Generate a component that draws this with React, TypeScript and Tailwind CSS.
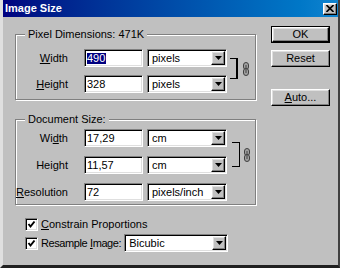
const sunken =
  'bg-white border border-t-[#808080] border-l-[#808080] border-r-white border-b-white shadow-[inset_1px_1px_0_#000,inset_-1px_-1px_0_#dfdfdf]'
const raised =
  'bg-[#c0c0c0] border border-t-white border-l-white border-r-black border-b-black shadow-[inset_-1px_-1px_0_#808080,inset_1px_1px_0_#dfdfdf]'
const etched = 'border border-[#808080] shadow-[inset_1px_1px_0_#fff,1px_1px_0_#fff]'

const Arrow = () => (
  <div className={`${raised} ml-auto w-[14px] h-[14px] flex items-center justify-center`}>
    <svg width="7" height="4" viewBox="0 0 7 4">
      <polygon points="0,0 7,0 3.5,4" fill="#000" />
    </svg>
  </div>
)

const Select = ({ value, className }: { value: string; className: string }) => (
  <div className={`${sunken} ${className} h-[18px] flex items-center pl-[4px] pr-[1px]`}>
    <span>{value}</span>
    <Arrow />
  </div>
)

const Field = ({ value, selected }: { value: string; selected?: boolean }) => (
  <div className={`${sunken} w-[59px] h-[18px] flex items-center pl-[2px]`}>
    {selected ? <span className="bg-[#000080] text-white leading-[11px] pr-[1px]">{value}</span> : value}
  </div>
)

const Row = ({ label, value, unit, selected }: { label: React.ReactNode; value: string; unit: string; selected?: boolean }) => (
  <div className="flex items-center">
    <div className="w-[52px] mr-[16px] text-right whitespace-nowrap">{label}</div>
    <Field value={value} selected={selected} />
    <Select value={unit} className="ml-[4px] w-[80px]" />
  </div>
)

const Chain = () => (
  <svg width="6" height="14" viewBox="0 0 6 14">
    <rect x="0.5" y="0.5" width="5" height="7" rx="2.5" fill="#a0a0a0" stroke="#404040" />
    <rect x="0.5" y="6.5" width="5" height="7" rx="2.5" fill="#a0a0a0" stroke="#404040" />
    <line x1="3" y1="3" x2="3" y2="11" stroke="#404040" />
  </svg>
)

const Check = () => (
  <div className={`${sunken} w-[13px] h-[13px] flex items-center justify-center shrink-0`}>
    <svg width="9" height="9" viewBox="0 0 9 9">
      <path d="M1.5 4 L3.5 6.5 L7.5 1.5" fill="none" stroke="#000" strokeWidth="2" />
    </svg>
  </div>
)

const Button = ({ children, isDefault }: { children: React.ReactNode; isDefault?: boolean }) =>
  isDefault ? (
    <div className="border border-black w-[59px] h-[17px]">
      <div className={`${raised} w-full h-full flex items-center justify-center`}>{children}</div>
    </div>
  ) : (
    <div className={`${raised} w-[59px] h-[17px] flex items-center justify-center`}>{children}</div>
  )

export default function App() {
  return (
    <div className="w-[340px] h-[268px] bg-[#c0c0c0] border-l-[3px] border-l-[#dfdfdf] border-r-[2px] border-r-[#404040] border-b-[3px] border-b-[#202020] font-['Liberation_Sans',Arial,sans-serif] text-[11px] text-black leading-none">
      {/* title bar */}
      <div className="h-[17px] flex items-center bg-gradient-to-r from-[#000080] to-[#1084d0] pl-[2px] pr-[1px]">
        <span className="text-white font-bold text-[11px]">Image Size</span>
        <div className={`${raised} ml-auto w-[14px] h-[12px] flex items-center justify-center`}>
          <svg width="8" height="7" viewBox="0 0 8 7">
            <path d="M0.5 0 L7.5 7 M7.5 0 L0.5 7" stroke="#000" strokeWidth="1.6" />
          </svg>
        </div>
      </div>

      <div className="flex">
        {/* left column */}
        <div className="flex flex-col pt-[17px] pl-[12px]">
          <div className={`relative w-[241px] h-[66px] ${etched}`}>
            <span className="absolute -top-[6px] left-[9px] px-[3px] bg-[#c0c0c0]">Pixel Dimensions: 471K</span>
            <div className="flex pt-[14px]">
              <div className="flex flex-col gap-[8px]">
                <Row label={<><u>W</u>idth</>} value="490" unit="pixels" selected />
                <Row label={<><u>H</u>eight</>} value="328" unit="pixels" />
              </div>
              <div className="flex items-center self-start mt-[9px]">
                <div className="ml-[3px] w-[8px] h-[21px] border-y border-r-2 border-black" />
                <div className="ml-[5px]">
                  <Chain />
                </div>
              </div>
            </div>
          </div>

          <div className={`relative mt-[19px] w-[241px] h-[86px] ${etched}`}>
            <span className="absolute -top-[6px] left-[9px] px-[3px] bg-[#c0c0c0]">Document Size:</span>
            <div className="flex flex-col gap-[9px] pt-[9px]">
              <div className="flex">
                <div className="flex flex-col gap-[9px]">
                  <Row label={<>Wi<u>d</u>th</>} value="17,29" unit="cm" />
                  <Row label={<>Hei<u>g</u>ht</>} value="11,57" unit="cm" />
                </div>
                <div className="flex items-center self-start mt-[13px]">
                  <div className="ml-[5px] w-[8px] h-[25px] border-y border-r border-black" />
                  <div className="ml-[4px]">
                    <Chain />
                  </div>
                </div>
              </div>
              <Row label={<><u>R</u>esolution</>} value="72" unit="pixels/inch" />
            </div>
          </div>

          <div className="flex flex-col gap-[1px] mt-[10px] pl-[10px]">
            <div className="h-[18px] flex items-center gap-[3px]">
              <Check />
              <span><u>C</u>onstrain Proportions</span>
            </div>
            <div className="h-[18px] flex items-center">
              <Check />
              <span className="ml-[3px] mr-[3px] whitespace-nowrap tracking-[-0.4px]">Resample <u>I</u>mage:</span>
              <Select value="Bicubic" className="w-[104px]" />
            </div>
          </div>
        </div>

        {/* right column */}
        <div className="flex flex-col pt-[9px] ml-[15px]">
          <Button isDefault>OK</Button>
          <div className="mt-[7px]">
            <Button>Reset</Button>
          </div>
          <div className="mt-[22px]">
            <Button>
              <span><u>A</u>uto...</span>
            </Button>
          </div>
        </div>
      </div>
    </div>
  )
}
